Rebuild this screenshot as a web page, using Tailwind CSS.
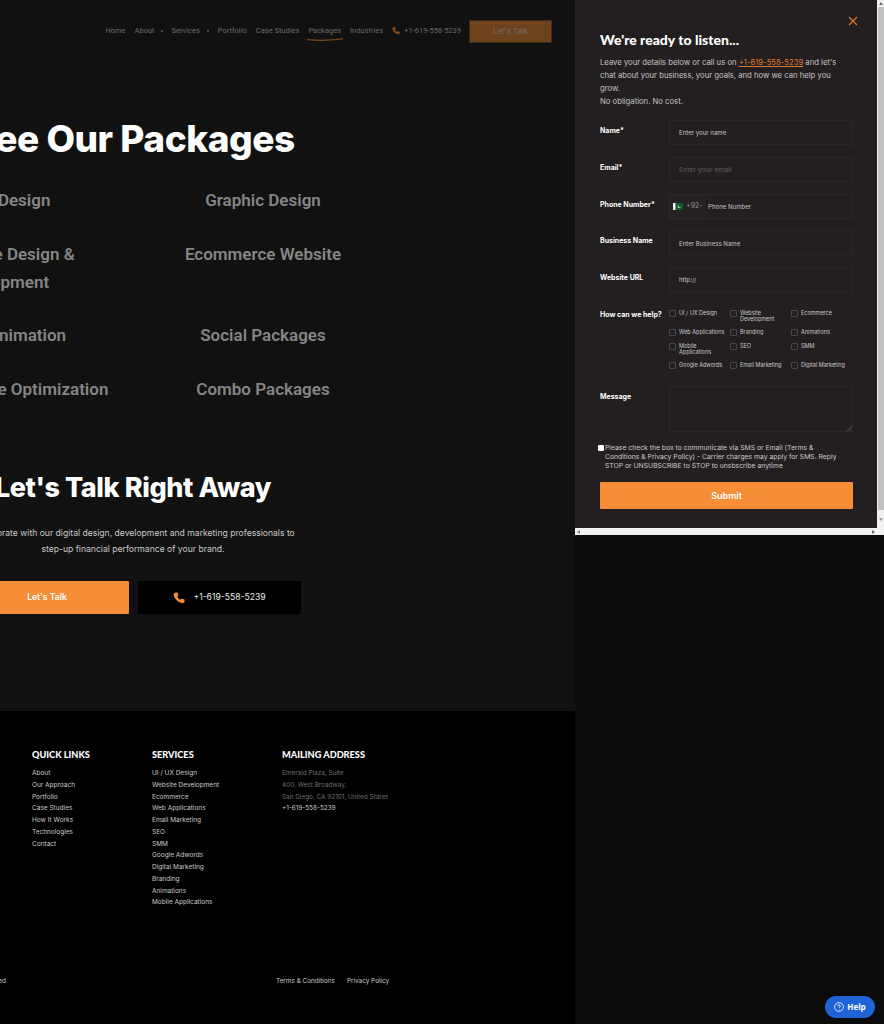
<!DOCTYPE html>
<html lang="en">
<head>
    <meta charset="UTF-8">
    <meta name="viewport" content="width=device-width, initial-scale=1.0">
    <title>See Our Packages</title>
    <script src="https://cdn.jsdelivr.net/npm/@tailwindcss/browser@4"></script>
</head>
<body class="bg-[#0b0b0b]">
<div class="relative w-[884px] h-[1024px] overflow-hidden font-['Inter',sans-serif] text-white">

    <div class="w-[575px]">
        <!-- Main section -->
        <main class="h-[711px] bg-[#111111] overflow-hidden">
            <!-- Header -->
            <header class="h-[66px] pt-5 pr-[23px] flex justify-end items-start">
                <nav class="h-[21px] flex items-center text-[7.500px] text-[#6a6a6a] font-['Roboto',sans-serif] mr-[8px]">
                    <a class="mr-[9px]">Home</a>
                    <a class="mr-[6px]">About</a>
                    <span class="w-[2px] h-[2px] rounded-full bg-[#8a4f1c] mr-[9px]"></span>
                    <a class="mr-[7px]">Services</a>
                    <span class="w-[2px] h-[2px] rounded-full bg-[#8a4f1c] mr-[9px]"></span>
                    <a class="mr-[9px]">Portfolio</a>
                    <a class="mr-[9px]">Case Studies</a>
                    <a class="relative mr-[9px]">Packages
                        <svg class="absolute left-[-1px] top-[13px] w-[36px] h-[3px]" viewBox="0 0 36 3" fill="none"><path d="M0 1.6C10 2.6 24 2.4 36 .8" stroke="#7a4719" stroke-width="1.2"/></svg>
                    </a>
                    <a class="mr-[9px]">Industries</a>
                    <svg class="w-[8px] h-[9px] mr-[4px]" viewBox="0 0 24 24" fill="#8a4f1c"><path d="M5 2h4l2 6-2.500 2c1.500 3.500 3.500 5.500 6.500 6.500l2-2.500 6 2v4c0 2-2 3-4 3C10 22 2 14 1.500 6c0-2 1.500-4 3.500-4z"/></svg>
                    <a>+1-619-558-5239</a>
                </nav>
                <a class="w-[83px] h-[23px] flex items-center justify-center bg-[#6e421c] border border-[#3c2a1b] text-[7.500px] font-semibold text-[#6f6457]">Let's Talk</a>
            </header>

            <!-- Packages -->
            <section class="ml-[-127px] w-[520px] text-center">
                <h1 class="mt-[49px] h-[48px] text-[37px] leading-[48px] font-extrabold tracking-[-0.45px]">See Our Packages</h1>
                <div class="mt-[23px] grid grid-cols-2 gap-y-[25.500px] text-[17px] leading-[28px] font-semibold text-[#858585] font-['Roboto',sans-serif]">
                    <div>Logo Design</div>
                    <div>Graphic Design</div>
                    <div><span class="block pl-[10px]">Website Design &amp;</span><span class="block pr-[8px]">Development</span></div>
                    <div>Ecommerce Website</div>
                    <div>Video Animation</div>
                    <div>Social Packages</div>
                    <div>Search Engine Optimization</div>
                    <div>Combo Packages</div>
                </div>
                <h2 class="mt-[67px] h-[36px] text-[27px] leading-[36px] font-extrabold tracking-[-0.4px]">Let's Talk Right Away</h2>
                <p class="mt-[19px] text-[8.600px] leading-[16px] text-[#c9c9c9]">Collaborate with our digital design, development and marketing professionals to<br>step-up financial performance of your brand.</p>
                <div class="mt-[24px] flex justify-center gap-[9px]">
                    <a class="w-[164px] h-[33px] flex items-center justify-center rounded-[1px] bg-[#f68d37] text-[8.600px] font-semibold">Let's Talk</a>
                    <a class="w-[163px] h-[33px] flex items-center justify-center gap-[8px] rounded-[1px] bg-black text-[8.600px] text-[#e8e8e8]">
                        <svg class="w-[12px] h-[13px]" viewBox="0 0 24 24" fill="#f68d37"><path d="M5 2h4l2 6-2.500 2c1.500 3.500 3.500 5.500 6.500 6.500l2-2.500 6 2v4c0 2-2 3-4 3C10 22 2 14 1.500 6c0-2 1.500-4 3.500-4z"/></svg>
                        +1-619-558-5239
                    </a>
                </div>
            </section>
        </main>

        <!-- Footer -->
        <footer class="h-[313px] bg-black overflow-hidden">
            <div class="h-[263px] pt-[37px] pl-[32px] flex text-[6.500px] leading-[11.750px] text-[#c9c9c9]">
                <div class="w-[120px]">
                    <h3 class="h-[14px] mb-[6px] text-[9.200px] leading-[14px] font-black font-['Lato',sans-serif] text-white">QUICK LINKS</h3>
                    <ul>
                        <li>About</li>
                        <li>Our Approach</li>
                        <li>Portfolio</li>
                        <li>Case Studies</li>
                        <li>How It Works</li>
                        <li>Technologies</li>
                        <li>Contact</li>
                    </ul>
                </div>
                <div class="w-[130px]">
                    <h3 class="h-[14px] mb-[6px] text-[9.200px] leading-[14px] font-black font-['Lato',sans-serif] text-white">SERVICES</h3>
                    <ul>
                        <li>UI / UX Design</li>
                        <li>Website Development</li>
                        <li>Ecommerce</li>
                        <li>Web Applications</li>
                        <li>Email Marketing</li>
                        <li>SEO</li>
                        <li>SMM</li>
                        <li>Google Adwords</li>
                        <li>Digital Marketing</li>
                        <li>Branding</li>
                        <li>Animations</li>
                        <li>Mobile Applications</li>
                    </ul>
                </div>
                <div class="text-[6.400px]">
                    <h3 class="h-[14px] mb-[6px] text-[9.200px] leading-[14px] font-black font-['Lato',sans-serif] text-white">MAILING ADDRESS</h3>
                    <p class="text-[#6e6e6e]">Emerald Plaza, Suite<br>400, West Broadway,<br>San Diego, CA 92101, United States</p>
                    <p>+1-619-558-5239</p>
                </div>
            </div>
            <div class="flex text-[6.400px] leading-[14px] text-[#c9c9c9]">
                <div class="ml-[-150px] w-[156px] text-right whitespace-nowrap">© All Rights Reserved</div>
                <div class="ml-[270px] flex gap-[12px]">
                    <a>Terms &amp; Conditions</a>
                    <a>Privacy Policy</a>
                </div>
            </div>
        </footer>
    </div>

    <!-- Contact modal -->
    <aside class="absolute left-[575px] top-0 w-[309px] h-[535px] bg-white flex flex-col">
        <div class="h-[528px] flex">
            <div class="w-[302px] bg-[#231f20] pl-[25px] pr-[24px] relative">
                <svg class="absolute right-[19px] top-[16px] w-[10px] h-[10px]" viewBox="0 0 10 10" fill="none" stroke="#d9782c" stroke-width="1.200"><path d="M1 1l8 8M9 1 1 9"/></svg>
                <h2 class="pt-[30px] h-[49px] text-[14px] leading-[19px] font-black font-['Lato',sans-serif]">We're ready to listen...</h2>
                <p class="mt-[7px] w-[240px] text-[7.700px] leading-[13px] text-[#c4c4c4]">Leave your details below or call us on <a class="underline text-[#e07b2e]">+1-619-558-5239</a> and let's chat about your business, your goals, and how we can help you grow.<br>No obligation. No cost.</p>

                <form class="mt-[12px]">
                    <div class="flex flex-col gap-[11.750px] text-[6.100px]">
                        <div class="flex">
                            <label class="w-[69px] pt-[6px] text-[7px] leading-[9px] font-bold">Name*</label>
                            <div class="w-[184px] h-[25px] pl-[9px] pt-[1px] flex items-center border border-[#2c2829] text-[#c4c4c4]">Enter your name</div>
                        </div>
                        <div class="flex">
                            <label class="w-[69px] pt-[6px] text-[7px] leading-[9px] font-bold">Email*</label>
                            <div class="w-[184px] h-[25px] pl-[9px] pt-[1px] flex items-center border border-[#2c2829] text-[#5f5c5c] text-[6.850px]">Enter your email</div>
                        </div>
                        <div class="flex">
                            <label class="w-[69px] pt-[6px] text-[7px] leading-[9px] font-bold">Phone Number*</label>
                            <div class="w-[184px] h-[25px] flex items-center border border-[#2c2829] text-[#c4c4c4]">
                                <div class="h-full w-[36px] flex items-center pl-[3px] bg-[#262223] shrink-0">
                                    <svg class="w-[10px] h-[7px]" viewBox="0 0 10 7"><rect width="10" height="7" fill="#0b5a2a"/><rect width="2.500" height="7" fill="#f2f2f2"/><circle cx="6.200" cy="3.500" r="1.500" fill="#e8f0ea"/><circle cx="6.800" cy="3.100" r="1.400" fill="#0b5a2a"/></svg>
                                    <span class="ml-[3px] text-[7px] text-[#8c8c8c]">+92</span>
                                    <span class="ml-[1px] text-[4px] text-[#6a6a6a]">▾</span>
                                </div>
                                <span class="ml-[2px] pt-[1px]">Phone Number</span>
                            </div>
                        </div>
                        <div class="flex">
                            <label class="w-[69px] pt-[6px] text-[7px] leading-[9px] font-bold">Business Name</label>
                            <div class="w-[184px] h-[25px] pl-[9px] pt-[1px] flex items-center border border-[#2c2829] text-[#c4c4c4]">Enter Business Name</div>
                        </div>
                        <div class="flex">
                            <label class="w-[69px] pt-[6px] text-[7px] leading-[9px] font-bold">Website URL</label>
                            <div class="w-[184px] h-[25px] pl-[9px] pt-[1px] flex items-center border border-[#2c2829] text-[#c4c4c4]">http://</div>
                        </div>
                    </div>

                    <div class="mt-[18px] flex">
                        <label class="w-[69px] text-[7px] leading-[9px] font-bold">How can we help?</label>
                        <div class="w-[184px] grid grid-cols-[61px_61px_62px] gap-y-[7px] text-[5.500px] leading-[6px] text-[#c8c8c8]">
                            <div class="flex gap-[3px]"><i class="w-[7px] h-[7px] shrink-0 border border-[#4a4647] rounded-[1px]"></i><span>UI / UX Design</span></div>
                            <div class="flex gap-[3px]"><i class="w-[7px] h-[7px] shrink-0 border border-[#4a4647] rounded-[1px]"></i><span>Website Development</span></div>
                            <div class="flex gap-[3px]"><i class="w-[7px] h-[7px] shrink-0 border border-[#4a4647] rounded-[1px]"></i><span>Ecommerce</span></div>
                            <div class="flex gap-[3px]"><i class="w-[7px] h-[7px] shrink-0 border border-[#4a4647] rounded-[1px]"></i><span>Web Applications</span></div>
                            <div class="flex gap-[3px]"><i class="w-[7px] h-[7px] shrink-0 border border-[#4a4647] rounded-[1px]"></i><span>Branding</span></div>
                            <div class="flex gap-[3px]"><i class="w-[7px] h-[7px] shrink-0 border border-[#4a4647] rounded-[1px]"></i><span>Animations</span></div>
                            <div class="flex gap-[3px]"><i class="w-[7px] h-[7px] shrink-0 border border-[#4a4647] rounded-[1px]"></i><span>Mobile Applications</span></div>
                            <div class="flex gap-[3px]"><i class="w-[7px] h-[7px] shrink-0 border border-[#4a4647] rounded-[1px]"></i><span>SEO</span></div>
                            <div class="flex gap-[3px]"><i class="w-[7px] h-[7px] shrink-0 border border-[#4a4647] rounded-[1px]"></i><span>SMM</span></div>
                            <div class="flex gap-[3px]"><i class="w-[7px] h-[7px] shrink-0 border border-[#4a4647] rounded-[1px]"></i><span>Google Adwords</span></div>
                            <div class="flex gap-[3px]"><i class="w-[7px] h-[7px] shrink-0 border border-[#4a4647] rounded-[1px]"></i><span>Email Marketing</span></div>
                            <div class="flex gap-[3px]"><i class="w-[7px] h-[7px] shrink-0 border border-[#4a4647] rounded-[1px]"></i><span>Digital Marketing</span></div>
                        </div>
                    </div>

                    <div class="mt-[17px] flex">
                        <label class="w-[69px] pt-[6px] text-[7px] leading-[9px] font-bold">Message</label>
                        <div class="relative w-[184px] h-[46px] border border-[#2c2829]">
                            <svg class="absolute right-0 bottom-0 w-[5px] h-[5px]" viewBox="0 0 5 5" stroke="#6a6a6a" stroke-width=".7"><path d="M0 5 5 0M2.500 5 5 2.500"/></svg>
                        </div>
                    </div>

                    <div class="mt-[11px] ml-[-2px] flex">
                        <i class="mt-[2px] w-[6px] h-[6px] shrink-0 bg-white rounded-[1px]"></i>
                        <p class="ml-[1px] w-[237px] text-[6.800px] leading-[9px] text-[#c9c9c9]">Please check the box to communicate via SMS or Email (Terms &amp; Conditions &amp; Privacy Policy) - Carrier charges may apply for SMS. Reply STOP or UNSUBSCRIBE to STOP to unsbscribe anytime</p>
                    </div>

                    <button type="button" class="mt-[12px] w-[253px] h-[27px] bg-[#f68d37] rounded-[1px] text-[9px] font-semibold text-white">Submit</button>
                </form>
            </div>
            <!-- Scrollbar -->
            <div class="w-[7px] bg-[#f1f1f1] flex flex-col items-center">
                <span class="mt-[2px] w-0 h-0 border-x-[2.500px] border-x-transparent border-b-[3px] border-b-[#6a6a6a]"></span>
                <span class="mt-[2px] w-[6px] h-[503px] bg-[#c1c1c1]"></span>
                <span class="mt-[8px] w-0 h-0 border-x-[2.500px] border-x-transparent border-t-[3px] border-t-[#a0a0a0]"></span>
            </div>
        </div>
        <div class="h-[7px] pl-[2px] pr-[9px] bg-[#f1f1f1] flex items-center justify-between">
            <span class="w-0 h-0 border-y-[2.500px] border-y-transparent border-r-[3px] border-r-[#8a8a8a]"></span>
            <span class="w-0 h-0 border-y-[2.500px] border-y-transparent border-l-[3px] border-l-[#6a6a6a]"></span>
        </div>
    </aside>

    <!-- Help widget -->
    <button type="button" class="absolute left-[825px] top-[996px] w-[50px] h-[22px] rounded-full bg-[#1f63d6] flex items-center justify-center gap-[3px] text-[8px] font-bold font-['Open_Sans',sans-serif]">
        <svg class="w-[10px] h-[10px]" viewBox="0 0 10 10" fill="none" stroke="white" stroke-width=".8"><circle cx="5" cy="5" r="4.400"/><path d="M3.700 4c0-1.700 2.600-1.700 2.600 0 0 1-1.300 1-1.300 2M5 7v.7"/></svg>
        Help
    </button>
</div>
</body>
</html>
